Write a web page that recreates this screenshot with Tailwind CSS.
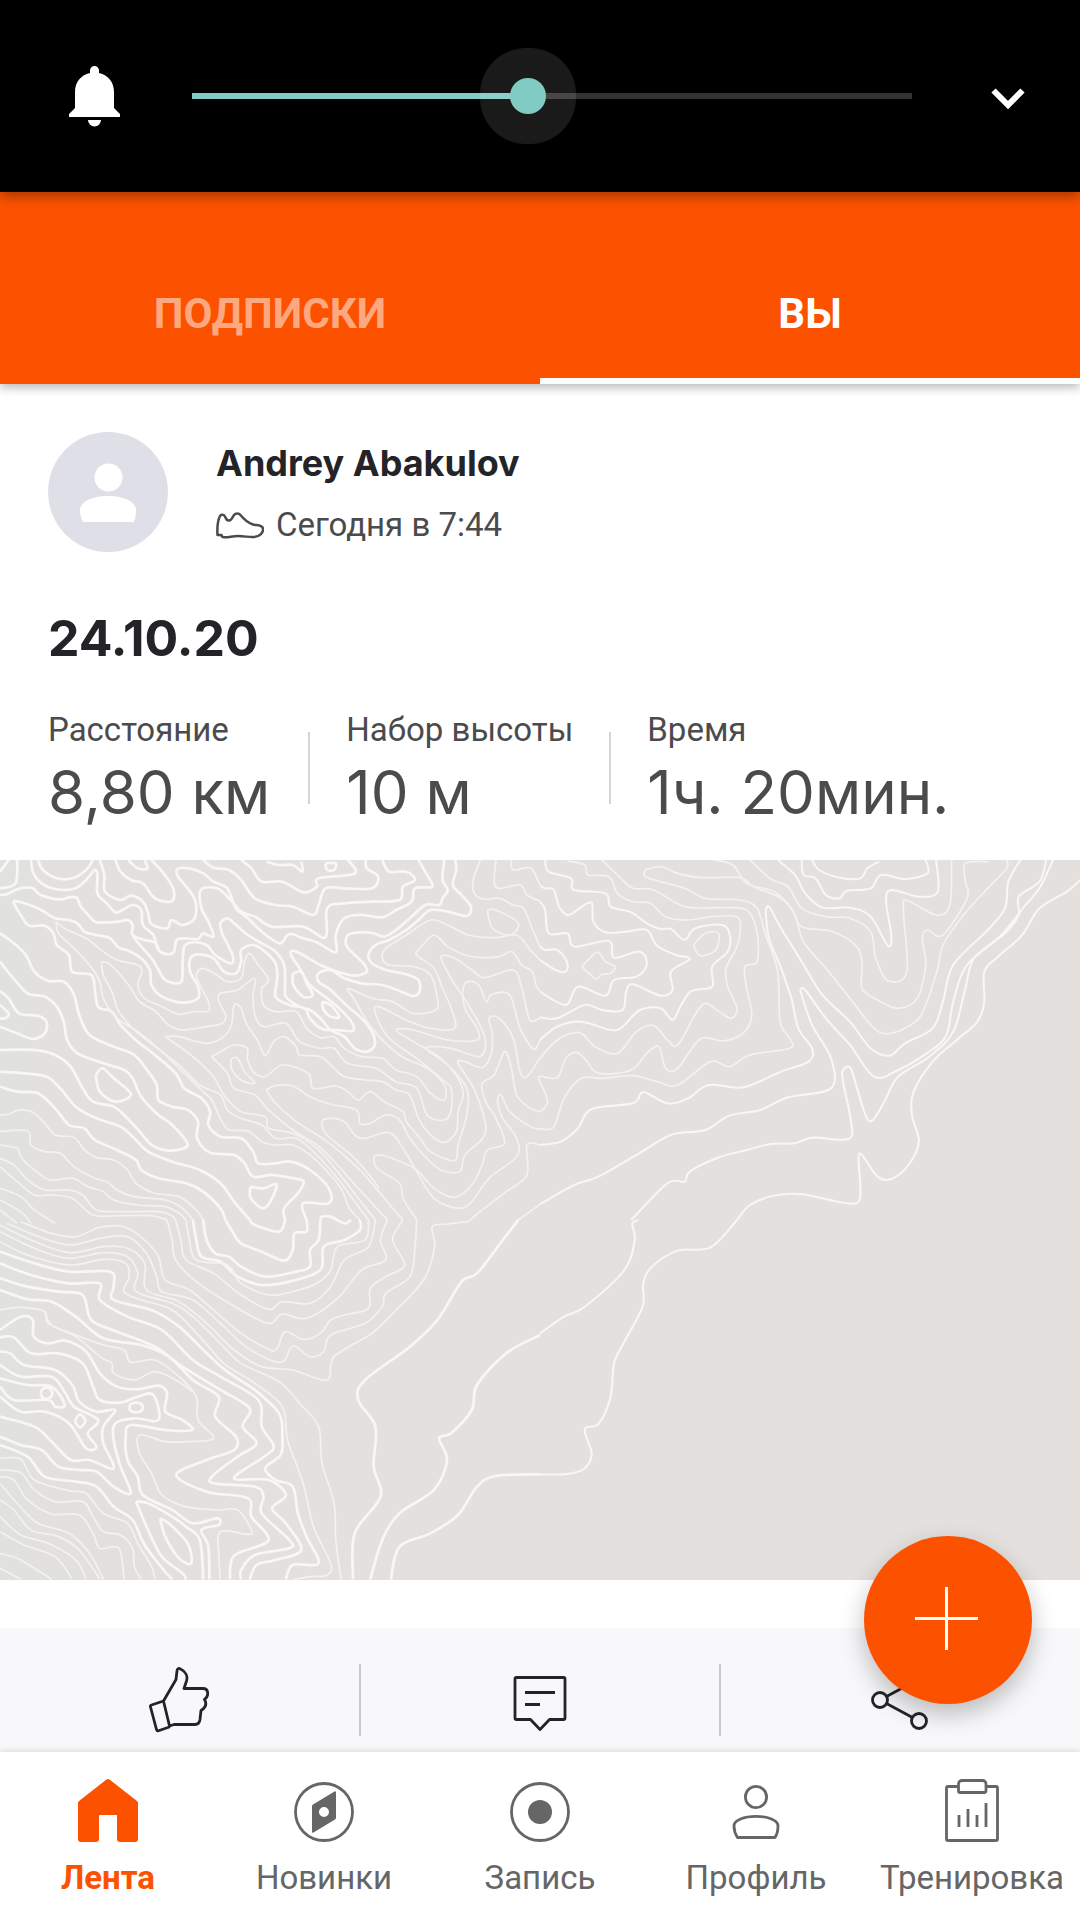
<!DOCTYPE html>
<html lang="ru">
<head>
    <meta charset="UTF-8">
    <meta name="viewport" content="width=device-width, initial-scale=1.0">
    <title>Лента</title>
    <script src="https://cdn.jsdelivr.net/npm/@tailwindcss/browser@4"></script>
</head>
<body class="bg-white font-['Roboto',sans-serif]">

<div class="flex flex-col h-screen overflow-hidden">

  <!-- Volume panel -->
  <div class="relative z-20 flex items-center shrink-0 h-48 pl-[60px] pr-9 bg-black shadow-[0_4px_12px_rgba(0,0,0,0.35)]">
    <button aria-label="Звонок" class="shrink-0">
      <svg class="w-[72px] h-[72px]" viewBox="0 4 72 72" fill="#fff">
        <path d="M30 14.500a4.500 4.500 0 0 1 9 0V17C48.500 19 54 26.500 54 36V52l6 6v3H9v-3l6-6V36C15 26.500 20.500 19 30 17z"/>
        <path d="M28 64h13a6.500 6.500 0 0 1-13 0z"/>
      </svg>
    </button>
    <div class="grid grow items-center mx-[60px]">
      <div class="flex col-start-1 row-start-1 h-[6px]">
        <div class="grow-[7] bg-[#80cbc4]"></div>
        <div class="grow-[8] bg-[#333333]"></div>
      </div>
      <input type="range" min="0" max="15" value="7" aria-label="Громкость" class="col-start-1 row-start-1 -mx-[18px] h-9 appearance-none bg-transparent [&::-webkit-slider-thumb]:appearance-none [&::-webkit-slider-thumb]:w-9 [&::-webkit-slider-thumb]:h-9 [&::-webkit-slider-thumb]:rounded-full [&::-webkit-slider-thumb]:bg-[#80cbc4] [&::-webkit-slider-thumb]:shadow-[0_0_0_30px_rgba(255,255,255,0.1)]">
    </div>
    <button aria-label="Развернуть" class="shrink-0">
      <svg class="w-[72px] h-[72px]" viewBox="0 0 72 72" fill="none" stroke="#fff" stroke-width="6">
        <path d="M21.500 30.500 36 45l14.500-14.500"/>
      </svg>
    </button>
  </div>

  <!-- Tabs -->
  <div class="relative z-10 grid grid-cols-2 shrink-0 h-48 pt-12 bg-[#fc5200] text-[42px] font-bold shadow-[0_3px_10px_rgba(0,0,0,0.3)]">
    <button class="border-b-[6px] border-transparent pt-2 text-white/50">ПОДПИСКИ</button>
    <button class="border-b-[6px] border-white pt-2 text-white">ВЫ</button>
  </div>

  <div class="relative grow min-h-0">
    <main class="h-full overflow-hidden">

      <!-- Athlete -->
      <div class="flex gap-12 px-12 pt-12">
        <svg class="w-[120px] h-[120px] shrink-0" viewBox="0 0 120 120">
          <circle cx="60" cy="60" r="60" fill="#dfdfe8"/>
          <circle cx="60.500" cy="45.500" r="14" fill="#fff"/>
          <path d="M36 90c-2 0-4-7-4-12 0-8 12-14 28-14s28 6 28 14c0 5-1 12-3 12z" fill="#fff"/>
        </svg>
        <div class="pt-1">
          <h2 class="font-['Inter',sans-serif] font-bold text-[36px] leading-[54px] text-[#242428]">Andrey Abakulov</h2>
          <div class="flex items-center gap-3 pt-2 text-[33px] leading-[54px] text-[#4b4b4d]">
            <svg class="w-12 h-[27px]" viewBox="0 0 48 27" fill="none" stroke="#4b4b4d" stroke-width="2.500" stroke-linejoin="round">
              <path d="M1.500 23C1 15 2 8 4 4c1-2 4-1.500 5 .5 1 2.500 2 4.500 4 4 3 0 3-3 5-5.500 1.500-2 5-2 6.500 0 4 5 8 8 12.500 9.500 4 1 9 0 10 4 .5 4-3 8-9 8.500-5 .5-9-1-16-1-6 0-9 1.500-14 1.200-1.800 0-2.500-1-2.500-2.200z"/>
            </svg>
            <span>Сегодня в 7:44</span>
          </div>
        </div>
      </div>

      <h1 class="px-12 pt-14 font-['Inter',sans-serif] font-bold text-[50px] leading-[60px] text-[#242428]">24.10.20</h1>

      <!-- Stats -->
      <dl class="flex items-end px-12 pt-10 pb-7 text-[#4b4b4d]">
        <div class="pr-[38px]">
          <dt class="text-[33px] leading-[44px]">Расстояние</dt>
          <dd class="font-['Inter',sans-serif] text-[60px] leading-[80px]">8,80 км</dd>
        </div>
        <div class="w-[2px] h-[72px] mb-7 bg-[#d5d5d7]"></div>
        <div class="px-[36px]">
          <dt class="text-[33px] leading-[44px]">Набор высоты</dt>
          <dd class="font-['Inter',sans-serif] text-[60px] leading-[80px]">10 м</dd>
        </div>
        <div class="w-[2px] h-[72px] mb-7 bg-[#d5d5d7]"></div>
        <div class="pl-[36px]">
          <dt class="text-[33px] leading-[44px]">Время</dt>
          <dd class="font-['Inter',sans-serif] text-[60px] leading-[80px]">1ч. 20мин.</dd>
        </div>
      </dl>

      <!-- Map, contour lines are drawn by the script below -->
      <svg id="map" class="block w-full bg-[#e3e0dd]" viewBox="0 0 1080 720" fill="none" stroke-linejoin="round">
        <defs>
          <linearGradient id="tint" x1="0" y1="0" x2="1" y2="0">
            <stop offset="0" stop-color="#e1e1dd"/>
            <stop offset="0.200" stop-color="#e3e0dd"/>
          </linearGradient>
        </defs>
        <rect width="1080" height="720" fill="url(#tint)"/>
      </svg>

      <!-- Kudos, comments, share -->
      <div class="flex items-center h-36 mt-12 bg-[#f8f8fa]">
        <button aria-label="Нравится" class="flex justify-center grow">
          <svg class="w-[60px] h-[66px]" viewBox="0 0 60 66" fill="none" stroke="#242428" stroke-width="2.800" stroke-linejoin="round">
            <path d="M14.500 34 27 12.500 28 4c.3-2.500 1.500-3.200 3.500-2 5 2.500 7.500 7 6 12l-2.500 7.500H54c6 0 6 8 1.500 11 2.500 4 1 8-3.500 11l-1 9c-.5 3.500-2 5-5 5H25l-4.500 1.500z"/>
            <path d="M14.500 34 2.500 38c-1 .3-1.300 1-1 2l6 22.500c.3 1 1 1.500 2 1.200l11.500-4"/>
          </svg>
        </button>
        <div class="w-[2px] h-[72px] bg-[#c9c9cc]"></div>
        <button aria-label="Комментарии" class="flex justify-center grow">
          <svg class="w-[60px] h-[66px]" viewBox="0 0 60 66" fill="none" stroke="#242428" stroke-width="2.800" stroke-linejoin="round">
            <path d="M6.500 10.500h47a1.500 1.500 0 0 1 1.500 1.500v39a1.500 1.500 0 0 1-1.500 1.500H39.500L30 62.500 20.500 52.500h-14A1.500 1.500 0 0 1 5 51V12a1.500 1.500 0 0 1 1.500-1.500z"/>
            <path d="M15 25.500h30M15 37.500h15"/>
          </svg>
        </button>
        <div class="w-[2px] h-[72px] bg-[#c9c9cc]"></div>
        <button aria-label="Поделиться" class="flex justify-center grow">
          <svg class="w-[60px] h-[66px]" viewBox="0 0 60 66" fill="none" stroke="#242428" stroke-width="2.800">
            <circle cx="9" cy="33" r="7.500"/>
            <circle cx="48" cy="54" r="7.500"/>
            <circle cx="48" cy="12" r="7.500"/>
            <path d="M15.500 29.500 41.500 15.500M15.500 36.500 41.500 50.500"/>
          </svg>
        </button>
      </div>
    </main>

    <button aria-label="Добавить" class="absolute right-12 bottom-12 flex items-center justify-center w-[168px] h-[168px] rounded-full bg-[#fc5200] shadow-[0_10px_24px_rgba(0,0,0,0.25)]">
      <svg class="w-[66px] h-[66px]" viewBox="0 0 66 66" stroke="#fff" stroke-width="3">
        <path d="M31.500 0v63M0 31.500h63"/>
      </svg>
    </button>
  </div>

  <!-- Bottom navigation -->
  <nav class="relative grid grid-cols-5 shrink-0 pt-6 pb-3 bg-white text-[33px] leading-[60px] text-[#666666] shadow-[0_-1px_6px_rgba(0,0,0,0.12)]">
    <a href="#" class="flex flex-col items-center font-bold text-[#fc5200]">
      <svg class="w-[72px] h-[72px]" viewBox="0 0 72 72" fill="currentColor">
        <path d="M34.500 3.600a2.500 2.500 0 0 1 3 0L65 25c.7.6 1 1.200 1 2v36a3 3 0 0 1-3 3H48a3 3 0 0 1-3-3V39H27v24a3 3 0 0 1-3 3H9a3 3 0 0 1-3-3V27c0-.8.3-1.400 1-2z"/>
      </svg>
      Лента
    </a>
    <a href="#" class="flex flex-col items-center">
      <svg class="w-[72px] h-[72px]" viewBox="0 0 72 72" fill="none">
        <circle cx="36" cy="36" r="28.500" stroke="currentColor" stroke-width="2.800"/>
        <path fill="currentColor" fill-rule="evenodd" d="M25 28.500 46.500 15.500c1-.6 1.500-.2 1.500 1V41.500c0 1-.3 1.600-1 2L25.500 56.500c-1 .6-1.500.2-1.500-1V30.500c0-1 .3-1.600 1-2zM36 31a5 5 0 1 0 0 10 5 5 0 0 0 0-10z"/>
      </svg>
      Новинки
    </a>
    <a href="#" class="flex flex-col items-center">
      <svg class="w-[72px] h-[72px]" viewBox="0 0 72 72" fill="none">
        <circle cx="36" cy="36" r="28.500" stroke="currentColor" stroke-width="2.800"/>
        <circle cx="36" cy="36" r="12" fill="currentColor"/>
      </svg>
      Запись
    </a>
    <a href="#" class="flex flex-col items-center">
      <svg class="w-[72px] h-[72px]" viewBox="0 0 72 72" fill="none" stroke="currentColor" stroke-width="2.800" stroke-linejoin="round">
        <circle cx="36" cy="21" r="10.600"/>
        <path d="M17.500 61.500c-2-3-3.500-7-3.500-11.500 0-6 10-9.600 22-9.600S58 44 58 50c0 4.500-1 8.500-3 11.500z"/>
      </svg>
      Профиль
    </a>
    <a href="#" class="flex flex-col items-center">
      <svg class="w-[72px] h-[72px]" viewBox="0 0 72 72" fill="none" stroke="currentColor" stroke-width="2.800">
        <path d="M22.500 10.500H12a1.500 1.500 0 0 0-1.500 1.500v51a1.500 1.500 0 0 0 1.500 1.500h48a1.500 1.500 0 0 0 1.500-1.500V12a1.500 1.500 0 0 0-1.500-1.500H50"/>
        <path d="M26 4.500h20.500a3.500 3.500 0 0 1 3.500 3.500v7a1.500 1.500 0 0 1-1.500 1.500H24a1.500 1.500 0 0 1-1.500-1.500V8A3.500 3.500 0 0 1 26 4.500z"/>
        <path d="M23 51V39M32 51V33M41 51V39M50 51V27"/>
      </svg>
      Тренировка
    </a>
  </nav>
</div>

<script>
    // Contour lines by map tile, points are x,y in tile units
    const tiles = [
        {
            transform: 'matrix(0.3444 0 0 0.3333 0 -5)',
            width: 8,
            bold: [
                '0,120 20,118 45,105 70,98 95,100 115,118 150,130 180,133 200,127 222,128 235,155 255,178 275,200 300,203 345,200 370,195 385,210 385,240 420,255 450,262 465,290 485,298 505,290 513,255 540,250 575,252 590,235 620,245 605,200 585,160 583,105 630,100 670,135 700,170 740,185 790,215 880,215 945,247 950,160 1000,145 1080,140 1160,135 1170,95 1205,75 1180,50 1130,50 1110,15',
                '90,15 95,50 115,80 150,100 185,105 220,100 250,75 275,45 283,60 283,115 310,145 335,172 355,165 385,150 410,165 415,210 445,240 460,285 485,298',
                '290,15 303,60 305,110 350,135 380,122 415,140 430,175 440,208 485,220 498,195 530,210 565,190 568,140 545,100 517,65 515,42 550,40 590,55 620,80 660,100 685,160 720,190 760,230 812,265 840,237 880,250 920,262 975,292 975,240 1000,190 1050,180 1110,187 1150,165 1195,140 1205,100 1255,95 1240,60 1215,15',
                '38,140 45,138 80,148 120,165 160,190 200,195 225,205 245,230 280,240 320,250 345,278 375,288 410,310 435,345 440,390 470,425 530,443 575,430 575,395 552,350 553,310 575,298 620,310 650,350 685,355 700,320 700,285 735,270 770,290 800,325 805,370 800,425 840,450 885,460 900,490 935,522 980,525 1025,527 1020,500 985,460 950,430 900,390 870,340 845,300 850,287 880,300 930,330 980,350 1030,362 1065,350 1055,325 1025,295 1005,270 1010,240 1045,232 1085,235 1115,245 1150,225 1190,190 1235,150 1275,150 1285,130 1300,105 1285,75 1290,15',
                '38,140 60,180 85,212 130,212 155,235 165,270 200,300 210,350 265,360 275,400 285,455 325,470 350,510 400,560 450,600 510,655 535,700 585,730 610,770 605,810 640,845 700,850 735,890 750,925 800,925 845,920 900,945 955,1000 955,1045 880,1045 890,1095',
                '385,240 400,262 440,310 455,335 480,375 525,382 530,330 535,275 560,262 600,270 625,300 670,325 675,300 645,235 640,205 660,190 680,205 720,240 760,265 800,290 825,330 828,380 830,425 870,455 900,465 930,490 960,525 1000,545 1030,580 1065,590 1088,570 1080,530 1050,490 1010,455 960,405 925,380 925,355 960,345 1000,370 1050,385 1110,390 1165,410 1200,423 1218,410 1215,375 1180,358 1120,345 1080,325 1070,300 1090,270 1130,255 1180,225 1215,195 1250,165 1300,170 1355,183 1367,155 1340,120 1315,90 1325,45 1322,15',
                '0,235 40,265 75,300 100,350 140,378 185,380 215,420 230,480 260,540 330,575 390,600 430,650 455,690 460,735 500,755 545,765 575,800 572,850 610,893 680,900 710,925 735,965 790,960 850,970 882,980 865,1015 825,1060 828,1095',
                '0,320 35,365 80,415 130,425 165,455 185,500 195,555 225,595 300,625 360,645 385,670 410,725 460,780 500,810 545,870 490,887 440,870 410,835 370,790 330,755 270,740 240,700 205,635 160,600 100,585 0,585',
                '0,408 25,430 55,475 110,482 135,500 130,535 95,552 50,535 0,515',
                '0,450 25,475 15,490 0,490',
                '0,650 70,655 135,665 175,700 220,755 280,790 350,815 390,850 430,890 500,920 580,945 640,985 680,1040 725,1095',
                '0,695 50,710 110,715 160,760 200,810 245,820 275,855 340,885 395,915 410,945 460,970 540,985 590,1010 640,1060 655,1095',
                '727,995 765,1000 802,988 790,1030 765,1060 728,1030 727,995',
                '278,660 298,640 330,670 380,718 335,740 290,710 278,660',
                '850,355 875,350 890,385 908,420 880,425 852,390 850,355',
                '935,440 960,450 985,485 960,485 940,465 935,440',
                '945,25 975,25 970,45 950,45 945,25',
                '110,15 125,45 165,70 210,70 250,45 270,15',
                '335,15 350,50 380,75 415,85 440,120 460,135 500,138 503,100 475,55 440,15',
                '372,15 400,40 428,40 420,15',
                '590,15 620,38 665,45 700,75 740,130 800,150 850,155 910,180 925,150 945,100 1000,100 1080,100 1098,65 1065,40 1062,15',
                '700,15 730,40 760,80 820,80 880,112 920,95 925,70 1030,55 1010,15',
                '775,20 810,30 850,30 878,50 875,20',
                '0,100 45,85 50,15',
                '0,50 25,15',
                '930,1095 935,1085 960,1085 1000,1105 1020,1095'
            ],
            thin: [
                '163,200 190,222 250,250 300,290 340,315 400,330 412,350 400,390 420,430 470,455 520,478 560,470 605,468 605,440 585,400 570,360 590,340 630,360 660,380 700,370 710,320 725,295 750,330 780,375 760,400 765,450 800,470 860,470 890,520 930,548 970,545 1000,580 1050,605 1110,610 1150,645 1210,665 1250,715 1290,735 1290,690 1240,640 1160,600 1080,520 1030,435 1010,400 1080,430 1140,440 1200,475 1265,465 1270,430 1250,360 1200,335 1130,330 1110,310 1120,280 1180,240 1250,195 1300,210 1360,240 1440,248 1500,240 1540,285 1568,315',
                '163,200 170,235 210,275 260,330 290,380 300,430 340,490 400,530 470,590 540,660 590,710 615,735 640,790 665,825 720,828 760,860 800,870 850,870 900,900 950,950 990,1000 1015,1060 1045,1095',
                '295,320 315,325 350,360 380,400 405,440 450,468 490,510 530,525 600,515 645,505 655,480 635,440 640,415 690,405 740,370 735,420 740,480 765,515 830,505 870,560 930,580 970,580 1010,625 1090,640 1150,680 1210,700 1240,780 1290,795 1310,765 1310,700 1280,670 1210,610 1130,550 1090,475 1100,455 1180,495 1250,520 1320,520 1310,460 1285,400 1260,340 1210,300 1220,280 1260,240 1300,275 1350,300 1400,308 1450,305 1487,290 1515,330 1545,350 1558,395 1568,408',
                '295,320 300,360 325,410 345,470 390,525 450,575 520,630 580,690 640,720 660,765 700,790 760,810 800,850 860,850 920,900 980,970 1030,1040 1070,1095',
                '480,545 520,545 600,565 650,545 672,510 680,450 700,460 715,505 750,560 770,602 795,560 825,545 860,575 870,600 930,605 970,640 1000,665 1060,675 1110,680 1150,705 1190,720 1215,790 1250,840 1290,862 1325,830 1330,770 1345,720 1330,670 1280,610 1200,560 1150,525 1200,525 1300,555 1385,555 1385,520 1350,460 1345,400 1360,380 1390,390 1412,440 1428,418 1480,420 1510,520 1549,582 1568,555',
                '480,545 560,605 620,665 650,720 700,770 770,785 780,820 850,835 920,880 980,950 1040,1030 1090,1095',
                '615,605 640,590 680,570 718,580 718,610 735,650 770,665 820,630 895,655 910,700 975,693 1010,710 1040,735 1075,710 1115,740 1170,770 1180,800 1220,850 1250,890 1320,917 1330,870 1355,780 1355,700 1300,630 1240,585 1250,575 1310,580 1390,605 1410,570 1400,525 1360,450 1310,370 1280,305 1320,310 1370,345 1408,368 1490,345 1515,400 1535,488 1549,498 1568,489',
                '615,605 660,655 680,700 740,720 780,765 850,825 920,870 980,930 1040,1000 1125,1095',
                '672,610 690,610 710,650 740,685 700,675 672,640 672,610',
                '773,705 800,692 850,693 900,725 960,748 1035,765 1045,805 1075,805 1120,780 1160,795 1190,850 1230,900 1280,945 1335,950 1350,900 1410,830 1380,710 1330,625 1350,620 1400,638 1425,600 1430,540 1420,490 1450,490 1490,550 1510,650 1530,665 1568,608',
                '773,705 800,745 860,800 950,860 1040,940 1100,1010 1140,1060 1170,1095',
                '1210,950 1170,880 1130,833 1060,850 1030,840 1000,800 960,790 935,800 950,840 1030,910 1080,970 1100,1000',
                '1085,905 1110,900 1150,915 1210,945 1260,1000 1320,1027 1370,990 1400,930 1415,885 1465,865 1440,790 1410,740 1400,685 1435,660 1465,590 1485,640 1500,720 1540,760 1568,770',
                '1085,905 1095,940 1160,985 1170,1030 1210,1095',
                '1210,950 1260,1030 1330,1060 1370,1040 1420,970 1500,905 1500,850 1460,790 1445,740 1455,720 1480,770 1540,815 1568,822',
                '1360,1100 1400,1065 1470,1010 1530,960 1530,870 1568,870',
                '1505,1095 1568,1048',
                '1395,15 1375,70 1375,110 1400,132 1450,130 1490,150 1520,160 1545,220 1568,275',
                '1440,15 1435,80 1450,100 1510,90 1530,120 1568,138',
                '1485,15 1490,45 1540,38 1563,80 1568,90',
                '1415,165 1440,165 1505,205 1480,240 1430,220 1415,165',
                '0,780 25,778 55,765 95,772 130,805 160,840 215,848 245,885 280,908 330,915 370,945 395,985 450,1015 520,1025 570,1065 590,1095',
                '0,830 80,828 90,870 130,890 175,895 215,935 275,970 310,980 340,1005 390,1025 480,1035 530,1060 560,1095',
                '0,870 50,880 60,905 100,945 145,975 210,970 255,995 300,1010 330,1035 400,1050 480,1055 520,1075 540,1095',
                '0,910 40,930 80,975 130,1005 200,1005 240,1020 280,1065 350,1070 460,1070 495,1080 510,1095',
                '0,935 50,980 100,1020 150,1020 210,1030 270,1080 350,1082 440,1082 485,1095',
                '0,1000 60,1025 100,1065 160,1105',
                '0,1035 60,1070 90,1105',
                '0,1065 50,1105'
            ]
        },
        {
            transform: 'matrix(0.3444 0 0 0.3333 540 -5)',
            width: 6,
            bold: [
                '0,92 15,100 40,105 55,155 75,178 90,178 115,160 150,143 155,200 190,232 250,230 310,225 340,272 395,300 435,312 380,350 385,405 350,422 270,388 250,410 240,465 180,465 130,450 50,490 0,487',
                '0,140 15,165 25,235 80,235 100,275 200,258 215,308 290,290 310,330 280,365 215,375 190,422 110,395 75,450 0,410',
                '0,275 15,285 50,285 78,320 75,350 45,345 0,315',
                '15,15 25,50 90,70 98,105 190,115 205,155 265,172 310,205 350,222 380,222 420,255 450,220 530,210 552,245 545,290 500,335 500,395 440,408 410,450 385,495 350,460 290,465 240,515 205,525 120,500 50,515 0,555',
                '760,15 765,60 800,70 830,120 870,130 890,108 960,100 990,60 1060,72 1125,55 1120,15',
                '790,15 810,45 870,68 930,70 950,40 985,20',
                '690,15 740,60 770,115 820,158 900,158 960,185 1010,272 1020,240 1005,140 1020,105 1100,125 1155,110 1150,15',
                '655,170 665,155 700,220 760,320 820,420 900,500 960,580 1015,602 1060,565 1140,520 1170,440 1200,330 1300,225 1350,160 1360,80 1395,15',
                '655,170 665,250 700,340 730,430 750,520 790,580 780,620 700,650 590,697 490,690 430,730 370,745 300,712 270,745 150,762 110,820 60,860 0,870',
                '755,405 770,405 830,490 900,570 970,665 1040,645 1130,590 1180,540 1200,440 1240,330 1350,235 1390,180 1390,125 1450,80 1470,15',
                '755,405 790,510 845,610 845,700 720,727 640,765 550,782 480,825 380,840 280,900 170,965 100,990 0,1048',
                '265,1095 370,985 420,980 435,950 520,907 600,885 670,867 740,865 790,848 895,852 903,800 880,680 880,645 900,637 915,680 945,780 965,797 1000,740 1040,665 1130,605 1200,530 1235,400 1260,310 1340,240 1410,150 1450,100 1490,15',
                '572,1095 610,1050 680,1022 760,1018 880,1043 925,1040 930,990 925,910 935,900 980,965 1020,972 1070,930 1100,860 1080,780 1085,710 1140,620 1210,555 1270,500 1290,440 1290,350 1330,305 1400,240 1450,160 1530,110 1568,75'
            ],
            thin: [
                '80,18 130,30 140,60 200,65 225,115 270,140 320,145 365,185 430,195 500,185 570,185 582,220 570,280 540,340 545,395 572,460 555,490 520,470 480,445 450,480 400,570 370,555 330,512 280,530 225,595 160,575 115,533 50,555 0,610',
                '180,15 235,70 270,100 330,105 420,155 520,158 600,165 630,230 630,320 595,335 600,400 615,480 590,535 530,558 465,552 400,640 365,640 345,575 310,595 265,645 170,655 130,610 105,592 75,610 50,668 0,663',
                '305,45 350,35 400,55 470,68 580,68 620,95 700,130 740,180 765,260 830,340 900,430 970,520 1020,535 1090,500 1120,450 1155,340 1170,270 1230,180 1300,100 1355,40 1355,15',
                '305,45 305,65 350,80 420,100 480,130 580,135 630,160 655,240 690,350 697,500 725,550 725,580 610,600 550,635 495,620 400,690 340,680 270,662 180,670 120,670 70,730 40,815 0,822',
                '610,15 670,72 720,95 760,160 830,185 900,190 960,230 975,310 1010,377 1065,350 1055,160 1070,138 1150,180 1190,150 1195,15',
                '505,15 560,30 600,85 680,110 730,160 760,215 850,230 920,275 935,330 935,400 980,435 1040,460 1095,430 1120,330 1110,250 1125,225 1170,240 1240,130 1235,80 1235,25 1300,20',
                '445,270 480,235 518,235 510,285 465,302 445,270',
                '122,335 165,292 190,320 218,335 205,355 180,358 165,372 145,358 122,335',
                '0,680 22,740 0,772',
                '0,680 -5,668 0,663'
            ]
        },
        {
            transform: 'matrix(0.3444 0 0 0.3333 0 360)',
            width: 8,
            bold: [
                '0,95 100,130 200,155 320,155 330,200 330,240 440,270 520,320 600,400 660,455 740,510 810,580 820,650 815,705 770,745 800,780 850,800 865,880 890,950 925,1030 850,1035 830,1078',
                '0,130 90,165 200,190 290,190 290,240 370,290 470,330 560,420 640,470 750,540 760,620 795,680 760,715 680,775 780,780 830,825 790,865 830,910 875,990 800,1020 745,1035 725,1078',
                '0,175 80,200 170,215 240,225 265,300 340,335 450,380 530,440 640,510 725,565 705,620 745,670 690,710 620,765 620,790 740,800 765,830 760,880 840,960 840,985 740,1005 700,1050 700,1078',
                '0,210 80,238 150,245 220,290 300,355 410,375 490,410 560,480 635,530 625,590 685,650 680,690 600,720 512,765 600,815 720,835 730,890 780,960 690,1000 670,1030 668,1078',
                '0,330 60,290 95,300 98,350 140,370 190,362 250,395 290,460 340,500 400,508 460,497 485,520 480,575 530,600 558,630 480,630 380,615 365,650 370,720 400,770 415,825 500,870 560,910 630,895 635,915 585,930 605,980 608,1078',
                '0,352 40,352 90,400 170,400 240,430 270,500 290,540 350,548 400,530 445,525 460,600 390,595 335,610 330,660 350,740 380,820 330,800 280,755 230,750 170,740 120,690 60,675 0,650',
                '0,395 30,400 70,435 160,450 210,495 230,545 280,575 335,570 300,620 300,670 330,745 260,720 205,720 150,665 100,620 0,590',
                '0,435 60,470 150,470 190,520 215,560 285,600 255,640 280,680 250,685 200,610 130,575 60,575 0,530',
                '0,475 80,495 150,500 188,555 160,560 140,540 40,540 0,500',
                '118,520 123,508 135,503 147,508 152,520 147,532 135,537 123,532 118,520',
                '217,603 232,583 248,603 232,623 217,603',
                '375,562 380,552 395,548 410,552 415,562 410,573 395,577 380,573 375,562',
                '0,675 80,710 130,770 220,785 280,800 330,860 385,900 420,975 475,1050 500,1078',
                '395,845 430,850 500,890 540,920 580,960 590,1078',
                '395,845 430,930 470,1010 530,1060 540,1078',
                '465,895 490,910 545,970 555,1030 520,1015 480,950 465,895',
                '655,0 675,35 700,70 760,95 825,122 850,90 855,40 890,35 890,0',
                '725,0 740,15 810,35 828,0',
                '590,0 600,60 625,100 665,110 700,140 770,170 860,155 900,140 900,90 925,60 930,0',
                '560,0 570,60 585,110 640,125 690,170 760,195 840,185 930,150 940,80 1000,60 1045,30 1045,0',
                '1505,0 1460,60 1385,160 1340,185 1270,300 1190,380 1060,480 1040,540 1090,620 1085,740 1105,830 1030,940 1025,1078',
                '1568,345 1470,400 1385,495 1370,570 1310,640 1275,655 1298,720 1260,810 1160,880 1110,960 1075,1078',
                '1568,763 1440,768 1385,800 1330,885 1250,940 1160,980 1135,1078'
            ],
            thin: [
                '60,5 150,40 220,50 290,22 360,20 420,60 460,110 480,180 550,210 620,270 700,340 780,388 805,385 828,335 880,358 930,340 960,300 1000,285 1070,265 1075,205 1120,170 1175,135 1140,60 1170,0',
                '20,10 100,45 200,75 290,55 370,50 425,100 455,170 470,215 560,240 640,310 720,385 815,427 850,378 900,410 940,395 960,345 1060,310 1110,260 1120,220 1190,170 1205,80 1210,0',
                '0,15 90,60 200,98 300,80 370,85 420,130 425,210 520,245 600,310 680,390 760,440 850,450 950,480 970,410 1080,340 1140,280 1230,180 1262,80 1255,20 1300,12 1360,5',
                '0,35 100,85 200,115 300,98 370,110 400,160 395,215 500,250 560,290 640,370 700,430 810,485 870,550 925,620 935,730 970,850 975,960 990,1078',
                '0,65 80,105 200,135 300,118 365,130 375,170 360,215 410,240 500,270 580,350 650,430 740,490 820,560 835,660 880,790 910,920 960,1030 950,1065 900,1070 855,1078',
                '0,270 60,262 130,275 140,310 220,345 300,375 360,390 380,427 450,420 520,470 570,530 575,600 620,655 540,665 480,665 405,645 405,700 440,760 470,825 540,860 630,870 690,870 730,930 720,943 640,935 635,1000 640,1078',
                '130,275 150,315 220,350 290,410 325,430 330,460 390,480 450,455 510,480 560,515',
                '540,0 550,60 570,120 660,135 700,190 780,225 850,215 920,190 960,150 980,80 1060,60 1070,0',
                '510,0 525,60 540,120 620,160 700,225 780,268 820,245 900,250 960,200 1000,120 1070,80 1090,0',
                '485,0 500,60 510,120 570,185 690,265 780,310 820,282 890,295 980,235 1050,150 1120,120 1105,60 1125,0',
                '0,715 60,718 100,780 200,812 250,820 300,880 370,910 400,970 440,1040 450,1078',
                '0,750 60,758 100,810 160,845 240,845 270,890 300,935 350,945 385,985 390,1040 410,1078',
                '0,770 40,780 80,840 150,882 230,885 270,940 290,985 345,985 360,1078',
                '0,790 50,850 110,910 200,940 260,1000 300,1078',
                '0,840 40,870 90,930 170,950 230,990 290,1078',
                '0,890 60,945 140,970 220,1020 250,1078',
                '0,935 70,975 160,1010 210,1078',
                '0,1000 60,1020 150,1078',
                '0,1045 60,1078'
            ]
        },
        {
            transform: 'matrix(0.3444 0 0 0.3333 540 360)',
            width: 6,
            bold: [
                '285,0 268,12 275,60 245,150 130,260 70,290 0,340',
                '572,0 495,82 400,92 325,140 300,190 298,260 245,365 215,430 205,530 170,612 130,628 150,700 130,745 80,762 0,763'
            ],
            thin: []
        }
    ];

    // Smooth curve through all points
    function curve(line) {
        const p = line.split(' ').map(pair => pair.split(',').map(Number));
        let d = 'M' + p[0];
        for (let i = 0; i < p.length - 1; i++) {
            const a = p[i - 1] || p[i], b = p[i], c = p[i + 1], e = p[i + 2] || c;
            d += 'C' + [b[0] + (c[0] - a[0]) / 6, b[1] + (c[1] - a[1]) / 6, c[0] - (e[0] - b[0]) / 6, c[1] - (e[1] - b[1]) / 6, c[0], c[1]];
        }
        return d;
    }

    const map = document.getElementById('map');
    const ns = 'http://www.w3.org/2000/svg';

    tiles.forEach(tile => {
        ['bold', 'thin'].forEach(weight => {
            const path = document.createElementNS(ns, 'path');
            path.setAttribute('transform', tile.transform);
            path.setAttribute('d', tile[weight].map(curve).join(''));
            path.setAttribute('stroke', weight === 'bold' ? '#f9f7f4' : '#f4f2ef');
            path.setAttribute('stroke-width', weight === 'bold' ? tile.width : 5);
            map.appendChild(path);
        });
    });
</script>

</body>
</html>
